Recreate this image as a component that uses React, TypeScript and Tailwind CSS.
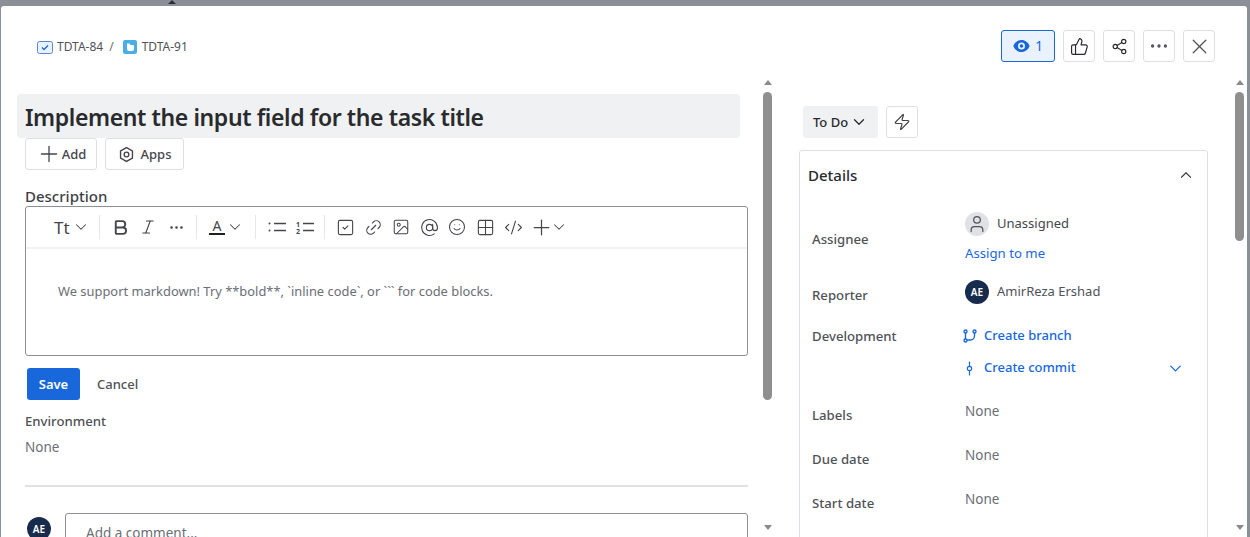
import { AtSign, Bold, ChevronDown, ChevronUp, CodeXml, Ellipsis, GitCommitVertical, Grid2x2, Image, Italic, Link2, Plus, Share2, Smile, SquareCheck, ThumbsUp, User, X, Zap } from "lucide-react";
import type { ReactNode } from "react";

function Scrollbar({ thumb, track }: { thumb: string; track: string }) {
    return (
        <div className={`flex flex-col items-center shrink-0 ${track}`}>
            <div className="h-[14px] flex items-start justify-center pt-[2px]">
                <div className="w-0 h-0 border-x-[4px] border-x-transparent border-b-[5px] border-b-[#8a8a8a]" />
            </div>
            <div className={`w-[9px] rounded-full bg-[#8f8f8f] ${thumb}`} />
            <div className="flex-1" />
            <div className="h-[16px] flex items-start justify-center pt-[4px]">
                <div className="w-0 h-0 border-x-[4px] border-x-transparent border-t-[5px] border-t-[#8a8a8a]" />
            </div>
        </div>
    );
}

function IconButton({ children }: { children: ReactNode }) {
    return <button className="w-8 h-8 flex items-center justify-center rounded-[3px] border border-[#dcdfe4] text-[#44546f]">{children}</button>;
}

function Divider() {
    return <div className="w-px h-6 bg-[#e4e6ea] shrink-0" />;
}

// 28px slot used by every toolbar icon
function Tool({ children }: { children: ReactNode }) {
    return <div className="w-[28px] h-6 flex items-center justify-center shrink-0">{children}</div>;
}

function Caret({ className }: { className: string }) {
    return (
        <div className={`w-[14px] flex items-center justify-center shrink-0 ${className}`}>
            <ChevronDown size={18} strokeWidth={1.4} className="shrink-0" />
        </div>
    );
}

function DetailRow({ label, value }: { label: string; value: string }) {
    return (
        <div className="flex h-[44px] pl-[4px]">
            <div className="w-[153px] pt-[6px] text-[13.2px] font-medium text-[#505258]">{label}</div>
            <div className="text-[13.5px] text-[#6b6e76] pt-[1px]">{value}</div>
        </div>
    );
}

function Avatar() {
    return <div className="w-6 h-6 rounded-full bg-[#172b4d] text-white text-[10px] font-semibold flex items-center justify-center">AE</div>;
}

export default function App() {
    return (
        <div className="relative w-[1250px] h-[537px] overflow-hidden bg-[#8b8f98] pt-[6px] pl-px pr-[3px] font-['Noto_Sans',sans-serif] text-[#292a2e]">
            {/* Page behind the modal */}
            <div className="absolute top-0 left-[168px] w-0 h-0 border-x-[4px] border-x-transparent border-b-[4px] border-b-[#2c3038]" />

            <div className="h-full rounded-t-[3px] bg-white flex flex-col overflow-hidden">
                {/* Header */}
                <header className="h-[72px] shrink-0 flex items-center justify-between pl-[36px] pr-[32px] pt-[8px]">
                    <div className="flex items-center pt-[2px] text-[12px] text-[#505258]">
                        <svg width="16" height="13" viewBox="0 0 16 13" className="mr-[4px]">
                            <rect x="0.5" y="0.5" width="15" height="12" rx="2" fill="#e9f2ff" stroke="#5b86d6" />
                            <path d="M5 6.5l2 2 4-4" fill="none" stroke="#1868db" strokeWidth="1.3" />
                        </svg>
                        <span>TDTA-84</span>
                        <span className="mx-[6px] text-[#6b6e76]">/</span>
                        <svg width="14" height="14" viewBox="0 0 14 14" className="ml-[3px] mr-[5px]">
                            <rect width="14" height="14" rx="2" fill="#4bade8" />
                            <path d="M4 3.500h2.500l1 1.500H10a1 1 0 0 1 1 1v3a2 2 0 0 1-2 2H6a2 2 0 0 1-2-2z" fill="#fff" />
                        </svg>
                        <span>TDTA-91</span>
                    </div>
                    <div className="flex items-center gap-[8px]">
                        <button className="w-[54px] h-8 flex items-center justify-center gap-[5px] rounded-[3px] border border-[#1868db] bg-[#e9f2fe] text-[#1868db] text-[13.5px]">
                            <svg width="17" height="12" viewBox="0 0 17 12">
                                <path fillRule="evenodd" d="M8.500 0C4.700 0 1.800 2.400 0.300 6c1.500 3.600 4.400 6 8.200 6s6.700-2.400 8.200-6C15.200 2.400 12.300 0 8.500 0zm0 9.500a3.500 3.500 0 1 1 0-7 3.500 3.500 0 0 1 0 7zM8.500 4.200a1.800 1.800 0 1 0 0 3.600 1.800 1.800 0 0 0 0-3.600z" fill="#1868db" />
                            </svg>
                            <span>1</span>
                        </button>
                        <IconButton><ThumbsUp size={19} strokeWidth={1.5} className="text-[#292a2e]" /></IconButton>
                        <IconButton><Share2 size={17} strokeWidth={1.6} className="text-[#292a2e]" /></IconButton>
                        <IconButton><Ellipsis size={22} strokeWidth={1.6} className="text-[#505258]" /></IconButton>
                        <IconButton><X size={25} strokeWidth={1.2} className="text-[#505258]" /></IconButton>
                    </div>
                </header>

                <div className="flex flex-1 min-h-0">
                    {/* Left column */}
                    <main className="w-[731px] ml-[16px] pl-[8px] shrink-0 pt-[16px] overflow-hidden">
                        <h1 className="-ml-[8px] w-[723px] h-[44px] pl-[8px] rounded-[3px] bg-[#f0f1f2] text-[23px] tracking-[-0.39px] leading-[46px] font-semibold text-[#292a2e]">Implement the input field for the task title</h1>
                        <div className="flex gap-[8px]">
                            <button className="h-8 w-[72px] flex items-center justify-center rounded-[3px] border border-[#dcdfe4] text-[13px] font-medium text-[#44464c]">
                                <Plus size={26} strokeWidth={1.2} /><span className="pt-px">Add</span>
                            </button>
                            <button className="h-8 w-[79px] flex items-center justify-center gap-[6px] rounded-[3px] border border-[#dcdfe4] text-[13px] font-medium text-[#44464c]">
                                <svg width="17" height="17" viewBox="0 0 16 16" fill="none" stroke="currentColor" strokeWidth="1.3">
                                    <path d="M8 1.500l5.600 3.200v6.600L8 14.500l-5.600-3.200V4.700z" />
                                    <circle cx="8" cy="8" r="2.200" />
                                </svg>
                                <span className="pt-px">Apps</span>
                            </button>
                        </div>

                        <div className="mt-[16px] text-[15px] leading-[20px] font-medium text-[#3d3f45]">Description</div>

                        {/* Editor */}
                        <div className="w-[723px] h-[150px] border border-[#8c8f97] rounded-[3px]">
                            <div className="h-[42px] flex items-center pl-[28px] border-b-2 border-[#f1f2f4] text-[#44464c]">
                                <span className="w-[20px] text-[17px] leading-none">Tt</span>
                                <Caret className="" />
                                <div className="ml-[11px]"><Divider /></div>
                                <div className="ml-[6px]"><Tool><Bold size={19} strokeWidth={2.4} /></Tool></div>
                                <Tool><Italic size={18} strokeWidth={1.5} /></Tool>
                                <Tool><Ellipsis size={17} strokeWidth={1.8} /></Tool>
                                <div className="ml-[6px]"><Divider /></div>
                                <div className="ml-[12px] w-4 flex flex-col items-center shrink-0">
                                    <span className="text-[14px] leading-[14px]">A</span>
                                    <div className="w-4 h-[2px] bg-[#1f2023]" />
                                </div>
                                <Caret className="ml-[3px]" />
                                <div className="ml-[13px]"><Divider /></div>
                                <div className="ml-[7px]">
                                    <Tool>
                                        <svg width="18" height="12" viewBox="0 0 18 12" fill="none" stroke="currentColor" strokeWidth="1.5">
                                            <path d="M6 2.500h12M6 9.500h12" />
                                            <circle cx="1.500" cy="2.500" r="1" fill="currentColor" stroke="none" />
                                            <circle cx="1.500" cy="9.500" r="1" fill="currentColor" stroke="none" />
                                        </svg>
                                    </Tool>
                                </div>
                                <Tool>
                                    <svg width="18" height="15" viewBox="0 0 18 15" fill="none" stroke="currentColor" strokeWidth="1.5">
                                        <path d="M7 3.500h11M7 10.500h11" />
                                        <text x="0" y="6.500" fontSize="7" fontWeight="700" fill="currentColor" stroke="none">1</text>
                                        <text x="0" y="14" fontSize="7" fontWeight="700" fill="currentColor" stroke="none">2</text>
                                    </svg>
                                </Tool>
                                <div className="ml-[5px]"><Divider /></div>
                                <div className="ml-[6px]"><Tool><SquareCheck size={19} strokeWidth={1.4} /></Tool></div>
                                <Tool><Link2 size={19} strokeWidth={1.4} className="-rotate-45" /></Tool>
                                <Tool><Image size={18} strokeWidth={1.4} /></Tool>
                                <Tool><AtSign size={19} strokeWidth={1.4} /></Tool>
                                <Tool><Smile size={18} strokeWidth={1.4} /></Tool>
                                <Tool><Grid2x2 size={19} strokeWidth={1.4} /></Tool>
                                <Tool><CodeXml size={19} strokeWidth={1.4} /></Tool>
                                <Tool><Plus size={25} strokeWidth={1.2} /></Tool>
                                <Caret className="-ml-[3px]" />
                            </div>
                            <p className="pl-[32px] pt-[32px] text-[12.9px] leading-[20px] text-[#6b6e76]">We support markdown! Try **bold**, `inline code`, or ``` for code blocks.</p>
                        </div>

                        <div className="mt-[12px] ml-[2px] flex items-center">
                            <button className="w-[53px] h-8 pt-px rounded-[3px] bg-[#1868db] text-white text-[13px] font-semibold">Save</button>
                            <button className="ml-[17px] pt-px text-[13px] font-medium text-[#505258]">Cancel</button>
                        </div>

                        <div className="mt-[11px] text-[13.2px] leading-[20px] font-medium text-[#505258]">Environment</div>
                        <div className="mt-[6px] text-[13.5px] leading-[20px] text-[#6b6e76]">None</div>
                        <div className="mt-[28px] w-[723px] h-[2px] bg-[#e0e1e3]" />

                        <div className="mt-[26px] w-[723px] flex gap-[14px] pl-[2px]">
                            <div className="mt-[4px]"><Avatar /></div>
                            <div className="flex-1 h-[40px] pl-[20px] pt-[9px] border border-[#8c8f97] rounded-[3px] text-[13.5px] text-[#6b6e76]">Add a comment...</div>
                        </div>
                    </main>

                    <Scrollbar track="ml-[12px] w-[15px]" thumb="h-[308px]" />

                    {/* Right column */}
                    <aside className="w-[409px] ml-[24px] shrink-0 overflow-hidden pt-[28px]">
                        <div className="flex gap-[8px] pl-[4px]">
                            <button className="w-[75px] h-8 flex items-center justify-center gap-[2px] rounded-[3px] bg-[#f0f1f2] text-[13px] font-medium text-[#292a2e]">
                                <span className="pt-px">To Do</span><ChevronDown size={18} strokeWidth={1.7} />
                            </button>
                            <IconButton><Zap size={18} strokeWidth={1.6} className="text-[#44464c]" /></IconButton>
                        </div>
                        <section className="mt-[12px] h-[420px] border border-[#dcdfe4] rounded-[3px] pl-[8px] pr-[12px]">
                            <div className="h-[51px] pb-[3px] flex items-center justify-between">
                                <h2 className="text-[15px] font-medium text-[#292a2e]">Details</h2>
                                <ChevronUp size={18} strokeWidth={1.6} className="text-[#44464c]" />
                            </div>
                            <div className="flex h-[68px] pt-[10px] pl-[4px]">
                                <div className="w-[153px] pt-[18px] text-[13.2px] font-medium text-[#505258]">Assignee</div>
                                <div>
                                    <div className="flex items-center gap-[8px]">
                                        <div className="w-6 h-6 rounded-full bg-[#dfe1e6] flex items-center justify-center"><User size={20} strokeWidth={1.5} className="text-[#505258]" /></div>
                                        <span className="text-[13px] text-[#44464c]">Unassigned</span>
                                    </div>
                                    <div className="mt-[8px] text-[13.2px] text-[#1868db]">Assign to me</div>
                                </div>
                            </div>
                            <div className="flex h-[49px] pt-[10px] pl-[4px]">
                                <div className="w-[153px] pt-[6px] text-[13.2px] font-medium text-[#505258]">Reporter</div>
                                <div className="flex items-center gap-[8px] h-6">
                                    <Avatar />
                                    <span className="text-[13px] text-[#505258]">AmirReza Ershad</span>
                                </div>
                            </div>
                            <div className="flex h-[81px] pl-[4px]">
                                <div className="w-[151px] pt-[8px] text-[13.2px] font-medium text-[#505258]">Development</div>
                                <div className="flex-1 pt-[1px] text-[13px] font-medium text-[#1868db]">
                                    <div className="flex items-center gap-[7px] h-[32px]">
                                        <svg width="14" height="14" viewBox="0 0 14 14" fill="none" stroke="currentColor" strokeWidth="1.4">
                                            <circle cx="2.500" cy="2.500" r="1.500" />
                                            <circle cx="2.500" cy="11.500" r="1.500" />
                                            <circle cx="11.500" cy="2.500" r="1.500" />
                                            <path d="M2.500 4v6M11.500 4v3a4 4 0 0 1-4 4H4" />
                                        </svg>
                                        Create branch
                                    </div>
                                    <div className="flex items-center h-[32px]">
                                        <GitCommitVertical size={17} strokeWidth={1.7} className="-ml-[2px]" />
                                        <span className="ml-[6px]">Create commit</span>
                                        <ChevronDown size={19} strokeWidth={1.6} className="ml-auto mr-[10px]" />
                                    </div>
                                </div>
                            </div>
                            <DetailRow label="Labels" value="None" />
                            <DetailRow label="Due date" value="None" />
                            <DetailRow label="Start date" value="None" />
                        </section>
                    </aside>

                    <Scrollbar track="ml-[24px] w-[15px]" thumb="h-[149px]" />
                </div>
            </div>
        </div>
    );
}
